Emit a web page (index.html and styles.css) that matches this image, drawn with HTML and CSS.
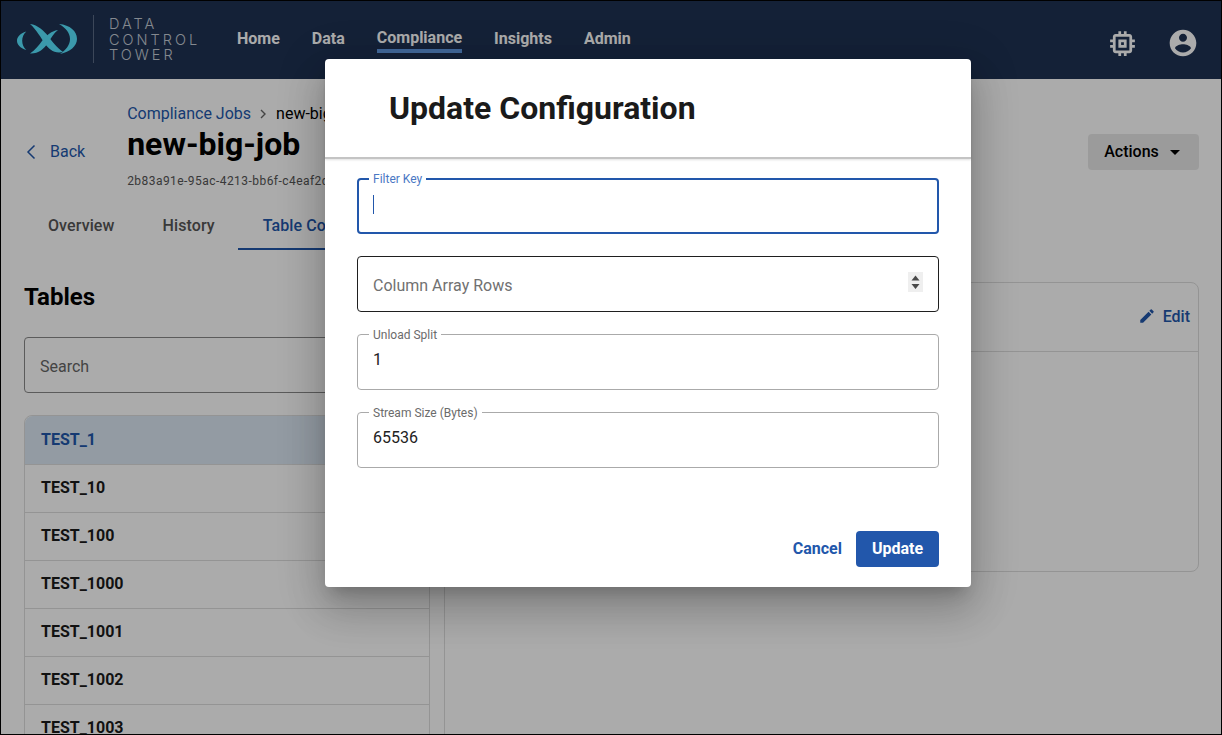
FILE: index.html
```html
<!DOCTYPE html>
<html lang="en">
<head>
<meta charset="utf-8">
<title>Update Configuration</title>
<link rel="stylesheet" href="styles.css">
</head>
<body>
<div class="frame">
  <header class="nav">
    <div class="brand">
      <svg class="logo" width="62" height="34" viewBox="0 0 62 34">
        <path fill="#58e5ff" d="M10.300 9.500C4 11.500 1 15 1 18.700S4 26 10.300 28C7.500 25.500 6.200 22 6.200 18.700S7.500 12 10.300 9.500Z"/>
        <path fill="#58e5ff" d="M14 2C22 3 28 9 32 14C36 19 40 25 47 30C38 32 33 27 29 22C25 16 20 7 14 2Z"/>
        <path fill="#58e5ff" d="M42 8C35 9 30 14 26 19C23 23 19 28 14 31.500C22 32 28 27 32 21C35 16 38 11 42 8Z"/>
        <path fill="#58e5ff" d="M43 2C54 3 61 9 61 17C61 24 54 30 44 32C50 28 54 23 54 17C54 11 50 6 43 2Z"/>
      </svg>
      <div class="brand-sep"></div>
      <div class="brand-name"><span>DATA</span><span>CONTROL</span><span>TOWER</span></div>
    </div>
    <nav class="menu">
      <a class="menu-item">Home</a>
      <a class="menu-item">Data</a>
      <a class="menu-item active">Compliance</a>
      <a class="menu-item">Insights</a>
      <a class="menu-item">Admin</a>
    </nav>
    <div class="nav-icons">
      <svg width="33" height="33" viewBox="0 0 24 24" fill="#fff"><path d="M15 9H9v6h6V9zm-2 4h-2v-2h2v2zm8-2V9h-2V7c0-1.100-.9-2-2-2h-2V3h-2v2h-2V3H9v2H7c-1.100 0-2 .9-2 2v2H3v2h2v2H3v2h2v2c0 1.100.9 2 2 2h2v2h2v-2h2v2h2v-2h2c1.100 0 2-.9 2-2v-2h2v-2h-2v-2h2zm-4 6H7V7h10v10z"/></svg>
      <svg width="32" height="32" viewBox="0 0 24 24" fill="#fff"><path d="M12 2C6.480 2 2 6.480 2 12s4.480 10 10 10 10-4.480 10-10S17.520 2 12 2zm0 3c1.660 0 3 1.340 3 3s-1.340 3-3 3-3-1.340-3-3 1.340-3 3-3zm0 14.200c-2.500 0-4.710-1.280-6-3.220.03-1.990 4-3.080 6-3.080 1.990 0 5.970 1.090 6 3.080-1.290 1.940-3.500 3.220-6 3.220z"/></svg>
    </div>
  </header>

  <main class="page">
    <section class="head">
      <a class="back">
        <svg width="10" height="16" viewBox="0 0 10 16" fill="none" stroke="#2257ab" stroke-width="1.500"><path d="M8.500 1.500 2 8l6.500 6.500"/></svg>
        <span>Back</span>
      </a>
      <div class="title-block">
        <div class="crumbs"><a>Compliance Jobs</a><svg class="chev" width="6" height="10" viewBox="0 0 6 10" fill="none" stroke="#666" stroke-width="1.400"><path d="M1 1l4 4-4 4"/></svg><span class="crumb-current">new-big-job</span></div>
        <h1>new-big-job</h1>
        <div class="uuid">2b83a91e-95ac-4213-bb6f-c4eaf2d0a1e7</div>
      </div>
      <button class="actions">Actions<span class="caret"></span></button>
    </section>

    <div class="tabs">
      <a class="tab">Overview</a>
      <a class="tab">History</a>
      <a class="tab current">Table Configuration</a>
    </div>

    <section class="columns">
      <aside class="tables">
        <h2>Tables</h2>
        <div class="search">Search</div>
        <ul class="table-list">
          <li class="selected">TEST_1</li>
          <li>TEST_10</li>
          <li>TEST_100</li>
          <li>TEST_1000</li>
          <li>TEST_1001</li>
          <li>TEST_1002</li>
          <li>TEST_1003</li>
        </ul>
      </aside>
      <div class="detail">
        <div class="card">
          <div class="card-head">
            <a class="edit">
              <svg width="18" height="18" viewBox="0 0 24 24" fill="#2257ab"><path d="M3 17.250V21h3.750L17.810 9.940l-3.750-3.750L3 17.250zM20.710 7.040a1 1 0 0 0 0-1.410l-2.340-2.340a1 1 0 0 0-1.410 0l-1.830 1.830 3.750 3.750 1.830-1.830z"/></svg>
              Edit
            </a>
          </div>
        </div>
      </div>
    </section>
  </main>

  <div class="backdrop"></div>

  <div class="dialog">
    <h3 class="dialog-title">Update Configuration</h3>
    <form class="dialog-body">
      <fieldset class="field focused">
        <legend>Filter Key</legend>
        <span class="caret-line"></span>
      </fieldset>
      <div class="field hovered">
        <span class="placeholder">Column Array Rows</span>
        <span class="spinner">
          <svg width="15" height="20" viewBox="0 0 15 20"><rect width="15" height="20" fill="#efefef"/><path fill="#4a4a4a" d="M7.500 3.500 11.500 8.500H3.500ZM3.500 12H11.500L7.500 17Z"/></svg>
        </span>
      </div>
      <fieldset class="field">
        <legend>Unload Split</legend>
        <span class="value">1</span>
      </fieldset>
      <fieldset class="field">
        <legend>Stream Size (Bytes)</legend>
        <span class="value">65536</span>
      </fieldset>
    </form>
    <div class="dialog-actions">
      <button class="btn-text">Cancel</button>
      <button class="btn-primary">Update</button>
    </div>
  </div>
</div>
</body>
</html>
```
FILE: styles.css
```css
* { box-sizing: border-box; }
html, body { margin: 0; height: 100%; overflow: hidden; }
body { font-family: Roboto, "Liberation Sans", sans-serif; color: #000; background: #000; }
.frame { position: relative; width: 1222px; height: 735px; border: 1px solid #000; overflow: hidden; background: #fff; display: flex; flex-direction: column; }

.nav { height: 78px; flex: none; background: #1e3253; display: flex; align-items: center; }
.brand { display: flex; align-items: center; margin-left: 15px; margin-bottom: 3px; width: 221px; }
.logo { flex: none; margin-top: 1px; }
.brand-sep { width: 1px; height: 48px; background: #5a6b85; margin-left: 15px; }
.brand-name { display: flex; flex-direction: column; margin: 2px 0 0 15px; font-family: Inter, sans-serif; font-weight: 300; font-size: 14.500px; line-height: 15.500px; letter-spacing: 3px; color: #c5ccd6; }
.brand-name span { display: block; height: 15.500px; }
.menu { display: flex; gap: 32px; align-items: flex-start; align-self: flex-start; margin-top: 28px; font-weight: 700; font-size: 16px; line-height: 19px; color: #fff; }
.menu-item { display: block; }
.menu-item.active { margin-top: -1px; padding-bottom: 2px; border-bottom: 4px solid #619ce6; }
.nav-icons { margin-left: auto; margin-top: 6px; display: flex; align-items: center; gap: 28px; margin-right: 22px; }

.page { flex: 1; min-height: 0; background: #fff; }
.head { display: flex; align-items: flex-start; height: 117px; padding: 25px 22px 0 25px; }
.back { display: flex; align-items: center; gap: 14px; margin-top: 38px; color: #2257ab; font-size: 16px; line-height: 19px; }
.title-block { margin-left: 42px; }
.crumbs { display: flex; align-items: center; font-size: 16px; line-height: 19px; white-space: nowrap; }
.crumbs a { color: #2257ab; }
.chev { margin: 0 10px 0 9px; flex: none; }
h1 { margin: -1px 0 0; font-size: 32px; line-height: 44px; font-weight: 700; }
.uuid { font-size: 12px; line-height: 14px; letter-spacing: .45px; color: #555; margin-top: 8px; white-space: nowrap; }
.actions { margin-left: auto; margin-top: 30px; width: 111px; height: 36px; padding: 0 3px 2px 0; border: 0; border-radius: 4px; background: #e8e8e8; font: 500 16px Roboto, sans-serif; color: #000; display: flex; align-items: center; justify-content: center; gap: 11px; }
.caret { width: 0; height: 0; margin-top: 2px; border-left: 5.500px solid transparent; border-right: 5.500px solid transparent; border-top: 5px solid #000; }

.tabs { display: flex; padding-left: 23px; height: 54px; font-weight: 500; font-size: 16px; letter-spacing: .1px; }
.tab { padding: 20px 24px 0; color: #555; }
.tab.current { margin-left: -1px; padding-left: 25px; color: #2257ab; border-bottom: 2px solid #2257ab; white-space: nowrap; }

.columns { display: flex; padding-left: 23px; }
.tables { width: 406px; flex: none; }
h2 { margin: 31px 0 0; font-size: 24px; line-height: 32px; font-weight: 700; }
.search { margin-top: 24px; height: 56px; border: 1px solid #888; border-radius: 4px; padding: 2px 15px 0; display: flex; align-items: center; color: #666; font-size: 16px; }
.table-list { list-style: none; margin: 22px 0 0; padding: 0; border: 1px solid #ddd; border-radius: 8px 8px 0 0; font-weight: 700; font-size: 16px; }
.table-list li { height: 48px; padding: 0 16px 2px; display: flex; align-items: center; border-bottom: 1px solid #ddd; color: #1a1a1a; }
.table-list li.selected { height: 49px; padding-bottom: 1px; color: #2257ab; background: #dbe8f3; border-radius: 8px 8px 0 0; }
.detail { flex: 1; border-left: 1px solid #ddd; margin-left: 14px; padding: 32px 22px 0 0; }
.card { height: 290px; border: 1px solid #ddd; border-radius: 8px; }
.card-head { height: 69px; border-bottom: 1px solid #ddd; display: flex; align-items: center; justify-content: flex-end; padding: 0 8px 2px 0; }
.edit { display: flex; align-items: center; gap: 7px; color: #2257ab; font-weight: 500; font-size: 16px; }

.backdrop { position: absolute; inset: 0; background: rgba(0, 0, 0, .33); }

.dialog { position: absolute; left: 324px; top: 58px; width: 646px; height: 528px; background: #fff; border-radius: 4px; box-shadow: 0 11px 15px -7px rgba(0,0,0,.2), 0 24px 38px 3px rgba(0,0,0,.14), 0 9px 46px 8px rgba(0,0,0,.12); display: flex; flex-direction: column; }
.dialog-title { margin: 0; height: 100px; flex: none; padding: 27px 0 0 64px; font-size: 32px; line-height: 44px; font-weight: 700; color: #1a1a1a; border-bottom: 2px solid #c4c4c4; box-shadow: 0 1px 2px rgba(0,0,0,.12); }
.dialog-body { padding: 20px 32px 0; display: flex; flex-direction: column; gap: 22px; flex: 1; }
.field { margin: 0; height: 56px; padding: 0 15px; border: 1px solid #aaa; border-radius: 4px; display: flex; align-items: center; min-width: 0; }
fieldset.field { height: 61px; margin-top: -5px; padding-top: 0; display: block; }
fieldset.focused { height: 60px; border: 2px solid #2257ab; padding-left: 14px; }
legend { font-size: 12px; line-height: 12px; height: 10px; padding: 0 4px; margin-left: -4px; color: #6b6b6b; }
.focused legend { color: #4a78c4; line-height: 10px; }
.hovered { border-color: #1f1f1f; padding-top: 2px; }
.placeholder { color: #717171; font-size: 16px; }
.value { display: block; font-size: 16px; line-height: 20px; color: #222; margin-top: 11px; }
.caret-line { display: block; width: 1px; height: 19px; background: #2257ab; margin-top: 11px; }
.spinner { margin-left: auto; margin-bottom: 6px; display: flex; }

.dialog-actions { display: flex; justify-content: flex-end; align-items: center; gap: 14px; padding: 0 32px 20px; }
.btn-text { border: 0; background: none; padding: 0 0 2px; font: 700 16px Roboto, sans-serif; color: #2257ab; }
.btn-primary { width: 83px; height: 36px; border: 0; border-radius: 4px; background: #2257ab; color: #fff; padding: 0 0 2px; font: 700 16px Roboto, sans-serif; }
```
